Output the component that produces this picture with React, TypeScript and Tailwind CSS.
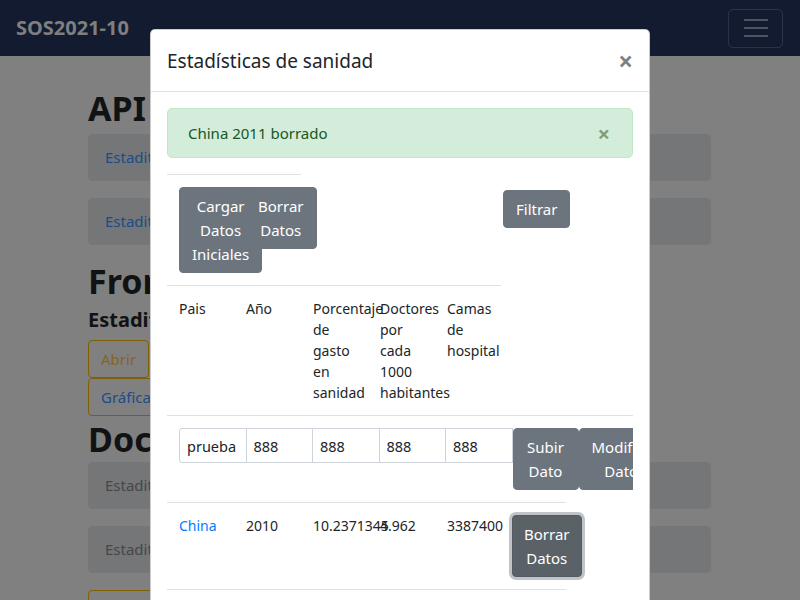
import React from "react"

function Btn({ children, className = "" }: { children: React.ReactNode; className?: string }) {
  return (
    <button
      type="button"
      className={`inline-block rounded-[4px] border border-[#6c757d] bg-[#6c757d] px-3 py-1.5 text-center text-[15px] leading-6 text-white ${className}`}
    >
      {children}
    </button>
  )
}

function Card({ children, muted = false }: { children: React.ReactNode; muted?: boolean }) {
  return (
    <div className="flex h-[47px] items-center rounded-[5px] bg-[#747678] px-[17px] text-[15px]">
      <span className={muted ? "text-[#45474a]" : "text-[#1b4c88]"}>{children}</span>
    </div>
  )
}

const cell = "w-[67px] shrink-0 p-3"

export default function App() {
  return (
    <div className="relative h-[600px] w-[800px] overflow-hidden bg-[#808080] font-['Noto_Sans',sans-serif] text-[#111214]">
      {/* Navbar */}
      <nav className="flex h-14 items-center justify-between bg-[#131b30] pl-4 pr-[17px]">
        <span className="text-[20px] font-bold text-[#7f7f7f]">SOS2021-10</span>
        <button
          type="button"
          className="flex h-[39px] w-[55px] flex-col items-center justify-center gap-[6px] rounded-[5px] border border-white/10"
        >
          <span className="h-[2px] w-6 bg-[#4d5466]" />
          <span className="h-[2px] w-6 bg-[#4d5466]" />
          <span className="h-[2px] w-6 bg-[#4d5466]" />
        </button>
      </nav>

      {/* Page behind the backdrop */}
      <main className="ml-[88px] w-[623px] pt-8">
        <h1 className="text-[34px] font-bold leading-[41px]">API</h1>
        <div className="mt-[5px] flex flex-col gap-[17px]">
          <Card>Estaditicas de sanidad API v1</Card>
          <Card>Estaditicas de sanidad API v2</Card>
        </div>

        <h1 className="mt-4 text-[34px] font-bold leading-[41px]">Front-End</h1>
        <h5 className="mt-[6px] text-[20px] font-bold leading-6">Estaditicas de sanidad</h5>
        <div className="mt-2 flex flex-col items-start">
          <span className="rounded-[4px] border border-[#7f6004] px-3 py-1.5 text-[15px] leading-6 text-[#85661c]">
            Abrir
          </span>
          <span className="rounded-[4px] border border-[#7f6004] px-3 py-1.5 text-[15px] leading-6 text-[#1b4c88]">
            Gráficas de sanidad
          </span>
        </div>

        <h1 className="mt-[3px] text-[34px] font-bold leading-[41px]">Documentación</h1>
        <div className="mt-[2px] flex flex-col gap-[17px]">
          <Card muted>Estaditicas de sanidad Postman v1</Card>
          <Card muted>Estaditicas de sanidad Postman v2</Card>
        </div>
        <div className="mt-[17px] flex">
          <span className="h-[38px] w-[80px] rounded-[4px] border border-[#7f6004]" />
        </div>
      </main>

      {/* Modal */}
      <div className="absolute left-[150px] top-[29px] w-[500px] rounded-t-[5px] border border-black/20 bg-white text-[#212529]">
        <div className="flex items-start justify-between border-b border-[#dee2e6] px-4 pb-[15px] pt-4">
          <h5 className="text-[19px] leading-[30px]">Estadísticas de sanidad</h5>
          <button type="button" className="mt-[1px] text-[26px] font-bold leading-[28px] text-black/50">
            ×
          </button>
        </div>

        <div className="p-4">
          {/* Alert */}
          <div className="mb-4 flex items-center justify-between rounded-[5px] border border-[#c3e6cb] bg-[#d4edda] py-3 pl-5 pr-[22px] text-[15px] leading-6 text-[#155724]">
            <span>China 2011 borrado</span>
            <span className="text-[22px] font-bold leading-6 text-[#155724]/50">×</span>
          </div>

          {/* Table */}
          <div className="overflow-hidden text-[14px] leading-[21px]">
            <div className="flex">
              <div className="flex border-t border-[#dee2e6]">
                <div className={cell}>
                  <Btn>Cargar Datos Iniciales</Btn>
                </div>
                <div className="w-[67px] shrink-0 py-3 pl-[11px]">
                  <Btn>Borrar Datos</Btn>
                </div>
              </div>
              <div className="ml-[202px] pt-4">
                <Btn>Filtrar</Btn>
              </div>
            </div>

            <div className="flex w-[334px] border-t border-[#dee2e6]">
              <div className={cell}>Pais</div>
              <div className={cell}>Año</div>
              <div className={cell}>Porcentaje de gasto en sanidad</div>
              <div className={cell}>Doctores por cada 1000 habitantes</div>
              <div className={cell}>Camas de hospital</div>
            </div>

            <div className="flex w-[560px] border-t border-[#dee2e6] p-3">
              <input
                readOnly
                value="prueba"
                className="h-[35px] w-[67.5px] shrink-0 rounded-l-[3px] border border-[#ced4da] px-[7px] text-[14.5px] text-[#212529] outline-none"
              />
              {[0, 1, 2, 3].map((i) => (
                <input
                  key={i}
                  readOnly
                  value="888"
                  className="-ml-px h-[35px] w-[67.5px] shrink-0 border border-[#ced4da] px-[7px] text-[14.5px] text-[#212529] outline-none"
                />
              ))}
              <div className="w-[66px] shrink-0">
                <Btn>Subir Dato</Btn>
              </div>
              <div className="w-[67px] shrink-0">
                <Btn>Modificar Datos</Btn>
              </div>
            </div>

            <div className="flex w-[399px] border-t border-[#dee2e6]">
              <div className={cell}>
                <span className="text-[#007bff]">China</span>
              </div>
              <div className={cell}>2010</div>
              <div className={cell}>10.2371345</div>
              <div className={cell}>4.962</div>
              <div className={cell}>3387400</div>
              <div className="w-[67px] shrink-0 py-3 pl-[10px]">
                <button
                  type="button"
                  className="inline-block rounded-[4px] border border-[#545b62] bg-[#5a6268] px-[11px] py-1.5 text-center text-[15px] leading-6 text-white shadow-[0_0_0_3px_rgba(130,138,145,0.5)]"
                >
                  Borrar Datos
                </button>
              </div>
            </div>

            <div className="h-[45px] w-[399px] border-t border-[#dee2e6]" />
          </div>
        </div>
      </div>
    </div>
  )
}
